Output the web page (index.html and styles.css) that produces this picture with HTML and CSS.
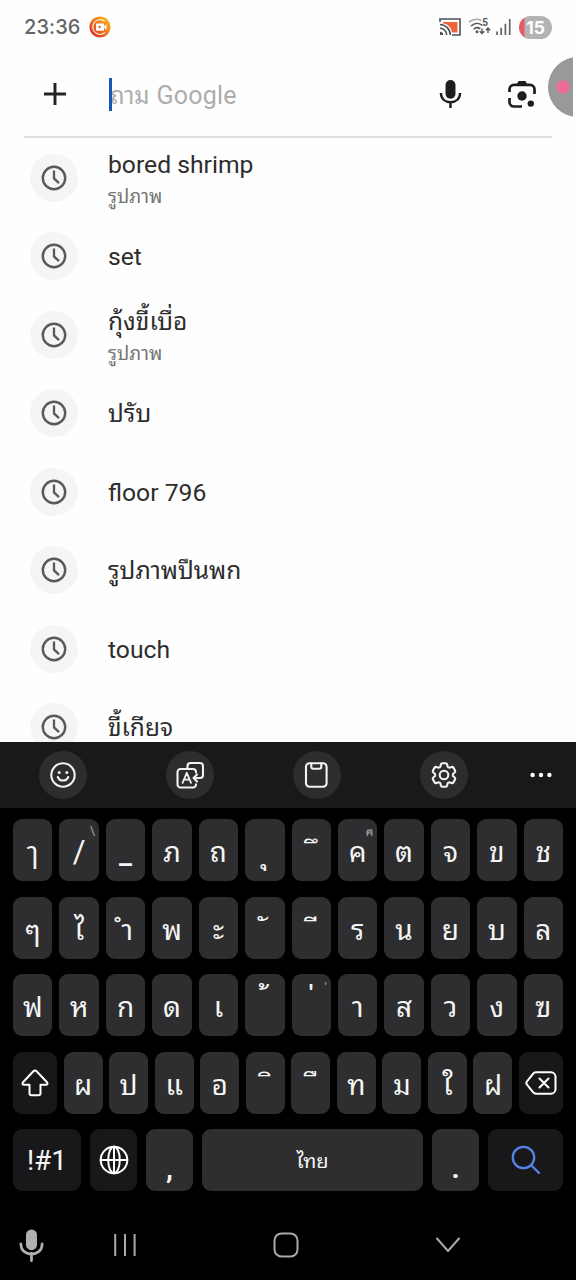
FILE: index.html
```html
<!DOCTYPE html>
<html lang="th">
<head>
<meta charset="utf-8">
<title>Google</title>
<link rel="stylesheet" href="styles.css">
</head>
<body>
<svg class="defs" width="0" height="0">
  <symbol id="clock" viewBox="0 0 26 26"><circle cx="13" cy="13" r="11.2" fill="none" stroke="currentColor" stroke-width="2.4"/><path d="M13 5.600v7.800l5 4.700" fill="none" stroke="currentColor" stroke-width="2.300"/></symbol>
  <symbol id="mic" viewBox="0 0 24 32"><rect x="6.7" y="1" width="10.6" height="20" rx="5.3" fill="currentColor"/><path d="M1.8 15c0 6 4.200 9.700 10.200 9.700s10.200-3.700 10.200-9.700M12 24v7" fill="none" stroke="currentColor" stroke-width="2.600"/></symbol>
</svg>
<div class="phone">
  <header class="status">
    <span class="time">23:36</span>
    <svg class="rec" viewBox="0 0 22 22"><defs><linearGradient id="rg" x1="1" y1="0" x2="0" y2="1"><stop offset="0.1" stop-color="#f6bd1c"/><stop offset="0.55" stop-color="#ed6722"/><stop offset="1" stop-color="#d51c25"/></linearGradient></defs><circle cx="11" cy="11" r="10.600" fill="url(#rg)"/><path d="M16 5.600A7.300 7.300 0 1 0 16 16.400" fill="none" stroke="#fbe9c9" stroke-width="1.300"/><rect x="7" y="7.500" width="8" height="7.200" rx="1" fill="#fff"/><path d="M14.500 11l3-2.700v5.600z" fill="#fff"/><circle cx="10.600" cy="11" r="1.200" fill="#e5602a"/></svg>
    <span class="grow"></span>
    <svg class="cast" viewBox="0 0 22 18"><path d="M1 4V1h20v16h-8" fill="none" stroke="#4b5157" stroke-width="1.600"/><path d="M4 4h14.500v10.500H13C12 9 8.500 6 4 5.500z" fill="#f0643c"/><path d="M1 6.500A10.500 10.500 0 0 1 11.300 17M1 10.300A6.700 6.700 0 0 1 7.700 17" fill="none" stroke="#4b5157" stroke-width="1.600"/><path d="M1 13.800A3.200 3.200 0 0 1 4.200 17H1z" fill="#4b5157"/></svg>
    <svg class="wifi" viewBox="0 0 23 18"><g fill="none" stroke-width="1.600"><path d="M1 4.200C5 .8 9 .5 13.500 2.400" stroke="#aaa"/><path d="M3 8c3.500-3.300 8-3.300 11.500-.5M5.700 11.300c2-2 4.500-2 6.600-.4" stroke="#565656"/><path d="M14 10.500v5M11.800 13.300l2.200 2.200 2.200-2.200M20 15V10M17.800 12.200L20 10l2.200 2.200" stroke="#565656" stroke-width="1.400"/></g><circle cx="9" cy="13.700" r="1.500" fill="#565656"/><text x="14.300" y="8" class="five">5</text></svg>
    <svg class="signal" viewBox="0 0 15 16"><path d="M1 12.500V16M5.200 8.700V16M9.400 4.700V16M13.700 0V16" stroke="#626262" stroke-width="1.700"/></svg>
    <span class="battery">15</span>
  </header>
  <section class="search">
    <svg class="plus" viewBox="0 0 22 22"><path d="M11 0v22M0 11h22" stroke="#222" stroke-width="2.900"/></svg>
    <div class="field"><span class="caret"></span><span class="hint">ถาม <b>Google</b></span></div>
    <svg class="mic"><use href="#mic"/></svg>
    <svg class="lens" viewBox="0 0 28 28"><g fill="none" stroke="#1d1d1d" stroke-width="2.700"><path d="M1.500 12V9.300a4.500 4.500 0 0 1 4.500-4.500h16a4.500 4.500 0 0 1 4.500 4.500V14M1.500 18v4a4.500 4.500 0 0 0 4.500 4.500h8"/></g><path d="M9 4l1.500-3h7L19 4v1.500H9z" fill="#1d1d1d"/><circle cx="14" cy="16" r="4.700" fill="#1d1d1d"/><circle cx="22.800" cy="23.600" r="3.200" fill="#1d1d1d"/></svg>
    <span class="bubble"></span>
  </section>
  <ul class="list">
    <li><i><svg><use href="#clock"/></svg></i><div><p>bored shrimp</p><small>รูปภาพ</small></div></li>
    <li><i><svg><use href="#clock"/></svg></i><div><p>set</p></div></li>
    <li><i><svg><use href="#clock"/></svg></i><div><p class="th">กุ้งขี้เบื่อ</p><small>รูปภาพ</small></div></li>
    <li><i><svg><use href="#clock"/></svg></i><div><p class="th">ปรับ</p></div></li>
    <li><i><svg><use href="#clock"/></svg></i><div><p>floor 796</p></div></li>
    <li><i><svg><use href="#clock"/></svg></i><div><p class="th">รูปภาพปืนพก</p></div></li>
    <li><i><svg><use href="#clock"/></svg></i><div><p>touch</p></div></li>
    <li><i><svg><use href="#clock"/></svg></i><div><p class="th">ขี้เกียจ</p></div></li>
  </ul>
  <section class="keyboard">
    <div class="tools">
      <i><svg viewBox="0 0 28 28"><circle cx="14" cy="14" r="11.700"/><path d="M8.800 16c1.800 4.700 8.600 4.700 10.400 0"/><circle class="dot" cx="10.200" cy="11.400" r="1.500"/><circle class="dot" cx="17.800" cy="11.400" r="1.500"/></svg></i>
      <i><svg viewBox="0 0 28 28"><path d="M20 11.500v-.500a3 3 0 0 0-3-3H4.500a3 3 0 0 0-3 3v12.500a3 3 0 0 0 3 3H17a3 3 0 0 0 3-3v-.300M11.500 7.500V5a3 3 0 0 1 3-3H24a3 3 0 0 1 3 3v9a3 3 0 0 1-3 3h-6M21 13.500L17.500 17l3.500 3.500"/><path d="M6.600 21.800l4.200-10 4.200 10M8 18.700h5.500" stroke-width="1.800"/></svg></i>
      <i><svg viewBox="0 0 28 28"><rect x="3" y="2.300" width="20.600" height="23.500" rx="3.500"/><path d="M8.300 2.500v3.200a2 2 0 0 0 2 2h6a2 2 0 0 0 2-2V2.500"/></svg></i>
      <i><svg viewBox="1.300 1.300 21.400 21.400" class="gear"><path d="M9.594 3.940c.09-.542.560-.940 1.110-.940h2.593c.550 0 1.020.398 1.110.940l.213 1.281c.063.374.313.686.645.870.074.040.147.083.220.127.325.196.720.257 1.075.124l1.217-.456a1.125 1.125 0 0 1 1.370.490l1.296 2.247a1.125 1.125 0 0 1-.260 1.431l-1.003.827c-.293.241-.438.613-.430.992a7.723 7.723 0 0 1 0 .255c-.008.378.137.750.430.991l1.004.827c.424.350.534.955.260 1.430l-1.298 2.247a1.125 1.125 0 0 1-1.369.491l-1.217-.456c-.355-.133-.750-.072-1.076.124a6.470 6.470 0 0 1-.220.128c-.331.183-.581.495-.644.869l-.213 1.281c-.09.543-.560.940-1.110.940h-2.594c-.550 0-1.019-.398-1.110-.940l-.213-1.281c-.062-.374-.312-.686-.644-.870a6.520 6.520 0 0 1-.220-.127c-.325-.196-.720-.257-1.076-.124l-1.217.456a1.125 1.125 0 0 1-1.369-.490l-1.297-2.247a1.125 1.125 0 0 1 .260-1.431l1.004-.827c.292-.240.437-.613.430-.991a6.932 6.932 0 0 1 0-.255c.007-.380-.138-.751-.430-.992l-1.004-.827a1.125 1.125 0 0 1-.260-1.430l1.297-2.247a1.125 1.125 0 0 1 1.370-.491l1.216.456c.356.133.751.072 1.076-.124.072-.044.146-.086.220-.128.332-.183.582-.495.644-.869l.214-1.280Z"/><circle cx="12" cy="12" r="3.300"/></svg></i>
      <svg class="more" viewBox="0 0 22 6"><circle cx="2.600" cy="3" r="2.200"/><circle cx="11" cy="3" r="2.200"/><circle cx="19.400" cy="3" r="2.200"/></svg>
    </div>
    <div class="keys">
      <div class="row r12"><kbd>ๅ</kbd><kbd class="sl">/<sup>\</sup></kbd><kbd class="under">_</kbd><kbd>ภ</kbd><kbd>ถ</kbd><kbd>&nbsp;ุ</kbd><kbd class="mark">&nbsp;ึ</kbd><kbd>ค<sup>ฅ</sup></kbd><kbd>ต</kbd><kbd>จ</kbd><kbd>ข</kbd><kbd>ช</kbd></div>
      <div class="row r12"><kbd>ๆ</kbd><kbd>ไ</kbd><kbd class="am">&nbsp;ำ</kbd><kbd>พ</kbd><kbd>ะ</kbd><kbd class="han">&nbsp;ั</kbd><kbd class="mark">&nbsp;ี</kbd><kbd>ร</kbd><kbd>น</kbd><kbd>ย</kbd><kbd>บ</kbd><kbd>ล</kbd></div>
      <div class="row r12"><kbd>ฟ</kbd><kbd>ห</kbd><kbd>ก</kbd><kbd>ด</kbd><kbd>เ</kbd><kbd class="tone">&nbsp;้</kbd><kbd class="tone mid">&nbsp;่<sup>'</sup></kbd><kbd>า</kbd><kbd>ส</kbd><kbd>ว</kbd><kbd>ง</kbd><kbd>ฃ</kbd></div>
      <div class="row shiftrow"><kbd class="dark"><svg class="shift" viewBox="0 0 28 28"><path d="M12.400 2.300L2 13.300c-1 1.200-.4 2.500 1 2.500h5.500v8.500a2 2 0 0 0 2 2h7a2 2 0 0 0 2-2v-8.500H25c1.400 0 2-1.300 1-2.500L15.600 2.300a2.200 2.200 0 0 0-3.200 0z"/></svg></kbd><kbd>ผ</kbd><kbd>ป</kbd><kbd>แ</kbd><kbd>อ</kbd><kbd class="mark">&nbsp;ิ</kbd><kbd class="mark">&nbsp;ื</kbd><kbd>ท</kbd><kbd>ม</kbd><kbd>ใ</kbd><kbd>ฝ</kbd><kbd class="dark"><svg class="back" viewBox="0 0 32 24"><path d="M11 1.300h15a4.500 4.500 0 0 1 4.500 4.500v12.400a4.500 4.500 0 0 1-4.500 4.500H11c-1.200 0-2.200-.6-3-1.500l-6-7.500a2.700 2.700 0 0 1 0-3.400l6-7.500c.8-1 1.800-1.500 3-1.500zM14.500 7.500l9 9M23.500 7.500l-9 9"/></svg></kbd></div>
      <div class="row bottomrow"><kbd class="dark sym">!#1</kbd><kbd class="dark"><svg class="globe" viewBox="0 0 30 30"><circle cx="15" cy="15" r="13.300"/><ellipse cx="15" cy="15" rx="5.800" ry="13.300"/><path d="M15 1.700v26.600M1.700 15h26.600"/></svg></kbd><kbd class="punct">,</kbd><kbd class="space">ไทย</kbd><kbd class="punct">.</kbd><kbd class="dark"><svg class="find" viewBox="0 0 30 30"><circle cx="12.500" cy="12.500" r="10.700"/><path d="M20 20l8 8"/></svg></kbd></div>
    </div>
    <nav class="nav">
      <svg class="nmic"><use href="#mic"/></svg>
      <svg class="recents" viewBox="0 0 22 22"><path d="M1.200 0v22M11 0v22M20.600 0v22"/></svg>
      <svg class="home" viewBox="0 0 26 26"><rect x="1.500" y="1.500" width="23" height="23" rx="7"/></svg>
      <svg class="down" viewBox="0 0 24 16"><path d="M1 1.500l11 12.500L23 1.500"/></svg>
    </nav>
  </section>
</div>
</body>
</html>
```
FILE: styles.css
```css
* { box-sizing: border-box; }
body { margin: 0; font-family: Roboto, "Noto Sans Thai Looped", "Noto Looped Thai", Loma, Waree, Garuda, "Noto Sans Thai", sans-serif; }
svg { display: block; flex: none; }
.defs { position: absolute; }
.phone { width: 576px; height: 1280px; overflow: hidden; background: #fefefe; display: flex; flex-direction: column; }
.status { height: 54px; padding: 0 24px; display: flex; align-items: center; flex: none; }
.time { font: 500 20px Inter, sans-serif; color: #666; width: 56px; letter-spacing: .1px; white-space: nowrap; }
.rec { width: 22px; height: 22px; margin-left: 9px; }
.grow { flex: 1; }
.cast { width: 22px; height: 18px; }
.wifi { width: 23px; height: 18px; margin-left: 7px; }
.five { font: 700 10px Roboto, sans-serif; fill: #565656; }
.signal { width: 15px; height: 16px; margin-left: 5px; }
.battery { width: 33px; height: 23px; margin-left: 8px; border-radius: 12px; background: linear-gradient(90deg, #e85a67 5px, #b3b3b3 6px); color: #fff; font: 700 17.500px/23px Inter, sans-serif; text-align: center; }
.search { height: 84px; margin: 0 0 0 24px; padding-bottom: 4px; display: flex; align-items: center; position: relative; flex: none; }
.search::after { content: ""; position: absolute; left: 0; bottom: 0; width: 528px; height: 2px; background: #dedede; }
.plus { width: 22px; height: 22px; margin-left: 20px; }
.field { width: 330px; margin-left: 43px; height: 33px; display: flex; align-items: center; }
.caret { width: 3px; height: 33px; background: #1558b8; position: relative; z-index: 1; }
.hint { font-size: 24px; line-height: 32px; color: #adadad; white-space: nowrap; margin: 4px 0 0 -2px; }
.hint b { font-size: 25px; font-weight: 400; letter-spacing: .2px; margin-left: 1px; }
.mic { width: 23px; height: 30px; color: #1d1d1d; }
.lens { width: 28px; height: 28px; margin-left: 46px; }
.bubble { position: absolute; left: 524px; top: 3px; width: 25px; height: 60px; clip-path: circle(30px at 30px 30px); background: radial-gradient(circle at 15px 30px, #ee6a9a 5.500px, #999 7.500px); }
.list { list-style: none; margin: 0; padding: .5px 0 0; height: 604px; overflow: hidden; flex: none; }
.list li { height: 78.500px; padding-left: 30px; display: flex; align-items: center; }
.list i { width: 48px; height: 48px; border-radius: 50%; background: #f4f5f7; color: #58595b; display: flex; align-items: center; justify-content: center; }
.list i svg { width: 26px; height: 26px; }
.list div { margin-left: 30px; padding-top: 2px; }
.list p { margin: 0; font-size: 24.700px; line-height: 36px; color: #2d2d2d; white-space: nowrap; }
.list p.th { font-size: 24.500px; }
.list small { display: block; font-size: 19px; line-height: 28px; color: #757575; }
.keyboard { height: 538px; background: #000; flex: none; }
.tools { height: 66px; background: #19191c; padding-left: 39px; display: flex; align-items: center; gap: 79px; }
.tools i { width: 48px; height: 48px; border-radius: 50%; background: #2d2d2f; display: flex; align-items: center; justify-content: center; flex: none; }
.tools i svg { width: 28px; height: 28px; fill: none; stroke: #f2f2f2; stroke-width: 2.100; stroke-linecap: round; stroke-linejoin: round; }
.tools .gear { stroke-width: 1.600; }
.tools .dot { fill: #f2f2f2; stroke: none; }
.more { width: 22px; height: 6px; fill: #fff; margin-left: -17px; }
.keys { padding: 11px 13px 0; display: grid; gap: 15.500px; }
.row { height: 62px; display: grid; grid-template-rows: 62px; }
.r12 { grid-template-columns: repeat(12, minmax(0, 1fr)); gap: 7px; }
.shiftrow { grid-template-columns: 44px repeat(10, minmax(0, 1fr)) 44px; gap: 6.500px; }
.bottomrow { grid-template-columns: 68px 47px 47px 221px 47px 75px; gap: 9px; }
kbd { position: relative; border-radius: 9px; background: #2e2e30; color: #f5f5f5; font: 28px/61px "Noto Sans Thai Looped", "Noto Looped Thai", Loma, Waree, Garuda, "Noto Sans Thai", Roboto, sans-serif; text-align: center; white-space: nowrap; }
kbd.dark { background: #18181a; display: flex; align-items: center; justify-content: center; }
kbd sup { position: absolute; right: 4px; top: 4px; font-size: 12px; line-height: 16px; color: #aaa; text-indent: 0; }
kbd.sl { font-family: Roboto, sans-serif; font-size: 31px; line-height: 65px; }
kbd.under { font-family: Roboto, sans-serif; font-weight: 500; font-size: 29px; line-height: 68px; }
kbd.mark { text-indent: 8px; line-height: 60px; }
kbd.han { text-indent: -1px; line-height: 60px; }
kbd.am { text-indent: -4px; }
kbd.tone { text-indent: 3px; line-height: 44px; }
kbd.mid { text-indent: 0; }
kbd svg { fill: none; stroke: #fff; stroke-width: 2; stroke-linecap: round; stroke-linejoin: round; }
.shift { width: 28px; height: 28px; }
.back { width: 32px; height: 24px; }
.globe { width: 30px; height: 30px; }
.find { width: 30px; height: 30px; stroke: #5583e8; stroke-width: 2.300; }
kbd.sym { font: 28px Roboto, sans-serif; }
kbd.punct { font: 700 28px/80px Roboto, sans-serif; }
kbd.space { font-size: 20px; line-height: 60px; }
.nav { display: flex; align-items: center; height: 70px; margin-top: 19px; padding-left: 19px; }
.nav svg { fill: none; stroke: #a9a9a9; stroke-width: 2; stroke-linecap: round; }
.nav .nmic { width: 25px; height: 34px; color: #b0b0b0; stroke: none; }
.recents { width: 22px; height: 22px; margin-left: 70px; }
.home { width: 26px; height: 26px; margin-left: 137px; }
.down { width: 24px; height: 16px; margin-left: 137px; }
```
